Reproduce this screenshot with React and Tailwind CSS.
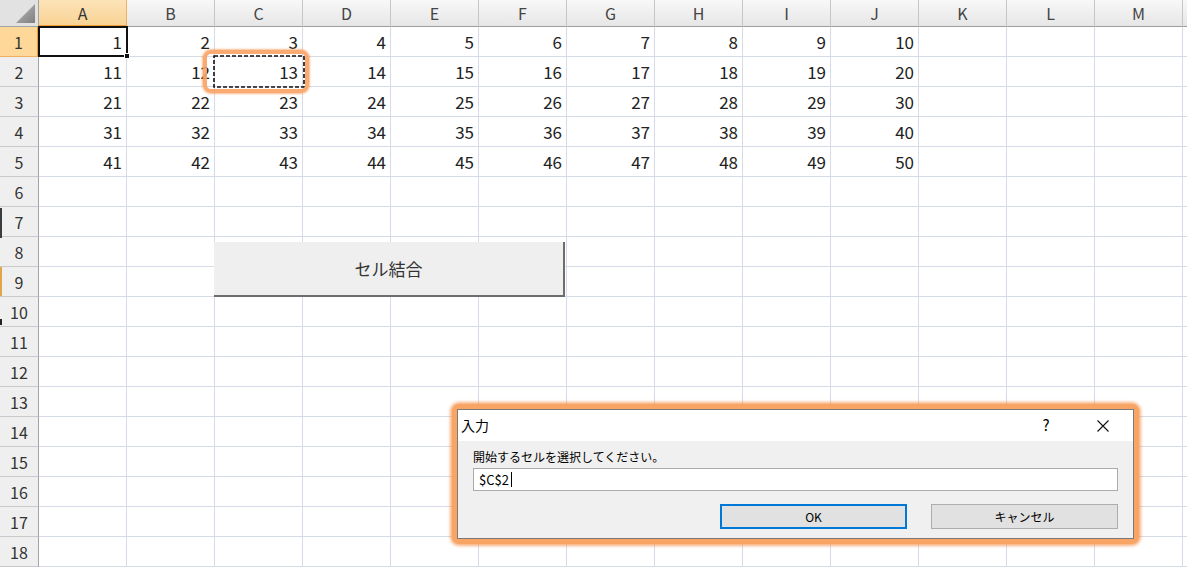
import React from 'react';

const COLS = ['A', 'B', 'C', 'D', 'E', 'F', 'G', 'H', 'I', 'J', 'K', 'L', 'M'];
const ROWS = Array.from({ length: 18 }, (_, i) => i + 1);

const font = { fontFamily: '"Noto Sans CJK JP", "Noto Sans", sans-serif' };

// value of a cell: rows 1-5, columns A-J hold 1..50
const cellValue = (r, c) => (r <= 5 && c < 10 ? (r - 1) * 10 + c + 1 : '');

const ColHeader = ({ label, active }) => (
  <div
    className={`flex items-center justify-center text-[16px] leading-none border-r ${
      active
        ? 'bg-gradient-to-b from-[#fce3b8] to-[#f9d394] text-[#333] border-[#f0b060] border-b-2 border-b-[#f09c34]'
        : 'bg-gradient-to-b from-[#f8f8f8] to-[#e6e6e6] text-[#444] border-[#c6c6c6] border-b border-b-[#9e9e9e]'
    }`}
  >
    {label}
  </div>
);

const RowHeader = ({ n, active }) => (
  <div
    className={`flex items-center justify-center text-[16px] leading-none border-b ${
      active
        ? 'bg-[#fdd898] text-[#333] border-[#f0b060] border-r-2 border-r-[#f09c34]'
        : 'bg-[#efefef] text-[#333] border-[#c9c9c9] border-r border-r-[#a3a3a3]'
    }`}
  >
    {n}
  </div>
);

const Cell = ({ value }) => (
  <div className="flex items-center justify-end pr-[4px] text-[17px] leading-none text-[#222] bg-white border-r border-b border-[#d5dbe7]">
    {value}
  </div>
);

const InputDialog = () => (
  <div className="absolute left-[452px] top-[404px] p-[5px] rounded-[7px] bg-[#f8a465] shadow-[0_0_3px_2px_rgba(246,138,60,0.65)]">
    <div className="w-[677px] h-[130px] flex flex-col border border-[#7a7a7a] bg-[#f0f0f0] text-[12px] text-black">
      {/* title bar */}
      <div className="h-[31px] flex items-center bg-white pl-[3px]">
        <span className="text-[14px] flex-1">入力</span>
        <span className="w-[20px] mr-[17px] text-center text-[15px]">?</span>
        <div className="w-[60px] flex justify-center">
          <svg width="12" height="12" viewBox="0 0 12 12">
            <path d="M0.5 0.5 L11.5 11.5 M11.5 0.5 L0.5 11.5" stroke="#111" strokeWidth="1.1" />
          </svg>
        </div>
      </div>
      {/* body */}
      <div className="flex-1 flex flex-col px-[15px] pt-[7px] pb-[9px]">
        <div className="h-[20px] leading-[18px]">開始するセルを選択してください。</div>
        <div className="h-[23px] flex items-center bg-white border border-[#ababab] pl-[5px] text-[13px]">
          $C$2<span className="ml-[2px] w-px h-[15px] bg-black" />
        </div>
        <div className="mt-[13px] flex justify-end gap-[24px]">
          <button className="w-[187px] h-[25px] bg-[#e1e1e1] border-2 border-[#0078d7] text-[12px]">OK</button>
          <button className="w-[187px] h-[25px] bg-[#e1e1e1] border border-[#adadad] text-[12px]">キャンセル</button>
        </div>
      </div>
    </div>
  </div>
);

export default function App() {
  return (
    <div className="relative w-[1187px] h-[567px] overflow-hidden bg-white" style={font}>
      <div className="grid grid-cols-[39px_repeat(13,88px)_1fr] grid-rows-[27px_repeat(18,30px)]">
        {/* corner */}
        <div className="relative bg-[#e2e2e2] border-r border-b border-[#a3a3a3]">
          <svg className="absolute right-[3px] bottom-[3px]" width="19" height="19" viewBox="0 0 19 19">
            <defs>
              <linearGradient id="tri" x1="0" y1="0" x2="1" y2="1">
                <stop offset="0" stopColor="#b8b8b8" />
                <stop offset="1" stopColor="#808080" />
              </linearGradient>
            </defs>
            <polygon points="19,0 19,19 0,19" fill="url(#tri)" />
          </svg>
        </div>
        {COLS.map((c) => (
          <ColHeader key={c} label={c} active={c === 'A'} />
        ))}
        <div className="bg-gradient-to-b from-[#f8f8f8] to-[#e6e6e6] border-b border-[#9e9e9e]" />

        {ROWS.map((r) => (
          <React.Fragment key={r}>
            <RowHeader n={r} active={r === 1} />
            {COLS.map((c, ci) => (
              <Cell key={c} value={cellValue(r, ci)} />
            ))}
            <div className="bg-white border-b border-[#d5dbe7]" />
          </React.Fragment>
        ))}
      </div>

      {/* window edge marks on the left */}
      <div className="absolute left-0 top-[208px] w-[2px] h-[30px] bg-[#3c3c3c]" />
      <div className="absolute left-0 top-[267px] w-[2px] h-[29px] bg-[#e2a64a]" />
      <div className="absolute left-0 top-[319px] w-[2px] h-[6px] bg-[#222]" />

      {/* active cell A1 */}
      <div className="absolute left-[38px] top-[26px] w-[90px] h-[31px] border-2 border-[#111]" />
      <div className="absolute left-[124px] top-[53px] w-[6px] h-[6px] bg-[#111] border border-white" />

      {/* copy range C2 with highlight */}
      <svg className="absolute left-[213px] top-[55px]" width="92" height="33">
        <rect x="1" y="1" width="90" height="31" fill="none" stroke="#111" strokeWidth="1.6" strokeDasharray="4 2" />
      </svg>
      <div className="absolute left-[203px] top-[50px] w-[106px] h-[43px] rounded-[8px] border-[4px] border-[#f8a264]/90 shadow-[0_0_2px_1px_rgba(246,140,60,0.6)]" />

      {/* form button */}
      <button className="absolute left-[214px] top-[242px] w-[351px] h-[55px] bg-[#efefef] border-r-2 border-b-2 border-[#6d6d6d] text-[17px] text-[#333]">
        セル結合
      </button>

      <InputDialog />
    </div>
  );
}
